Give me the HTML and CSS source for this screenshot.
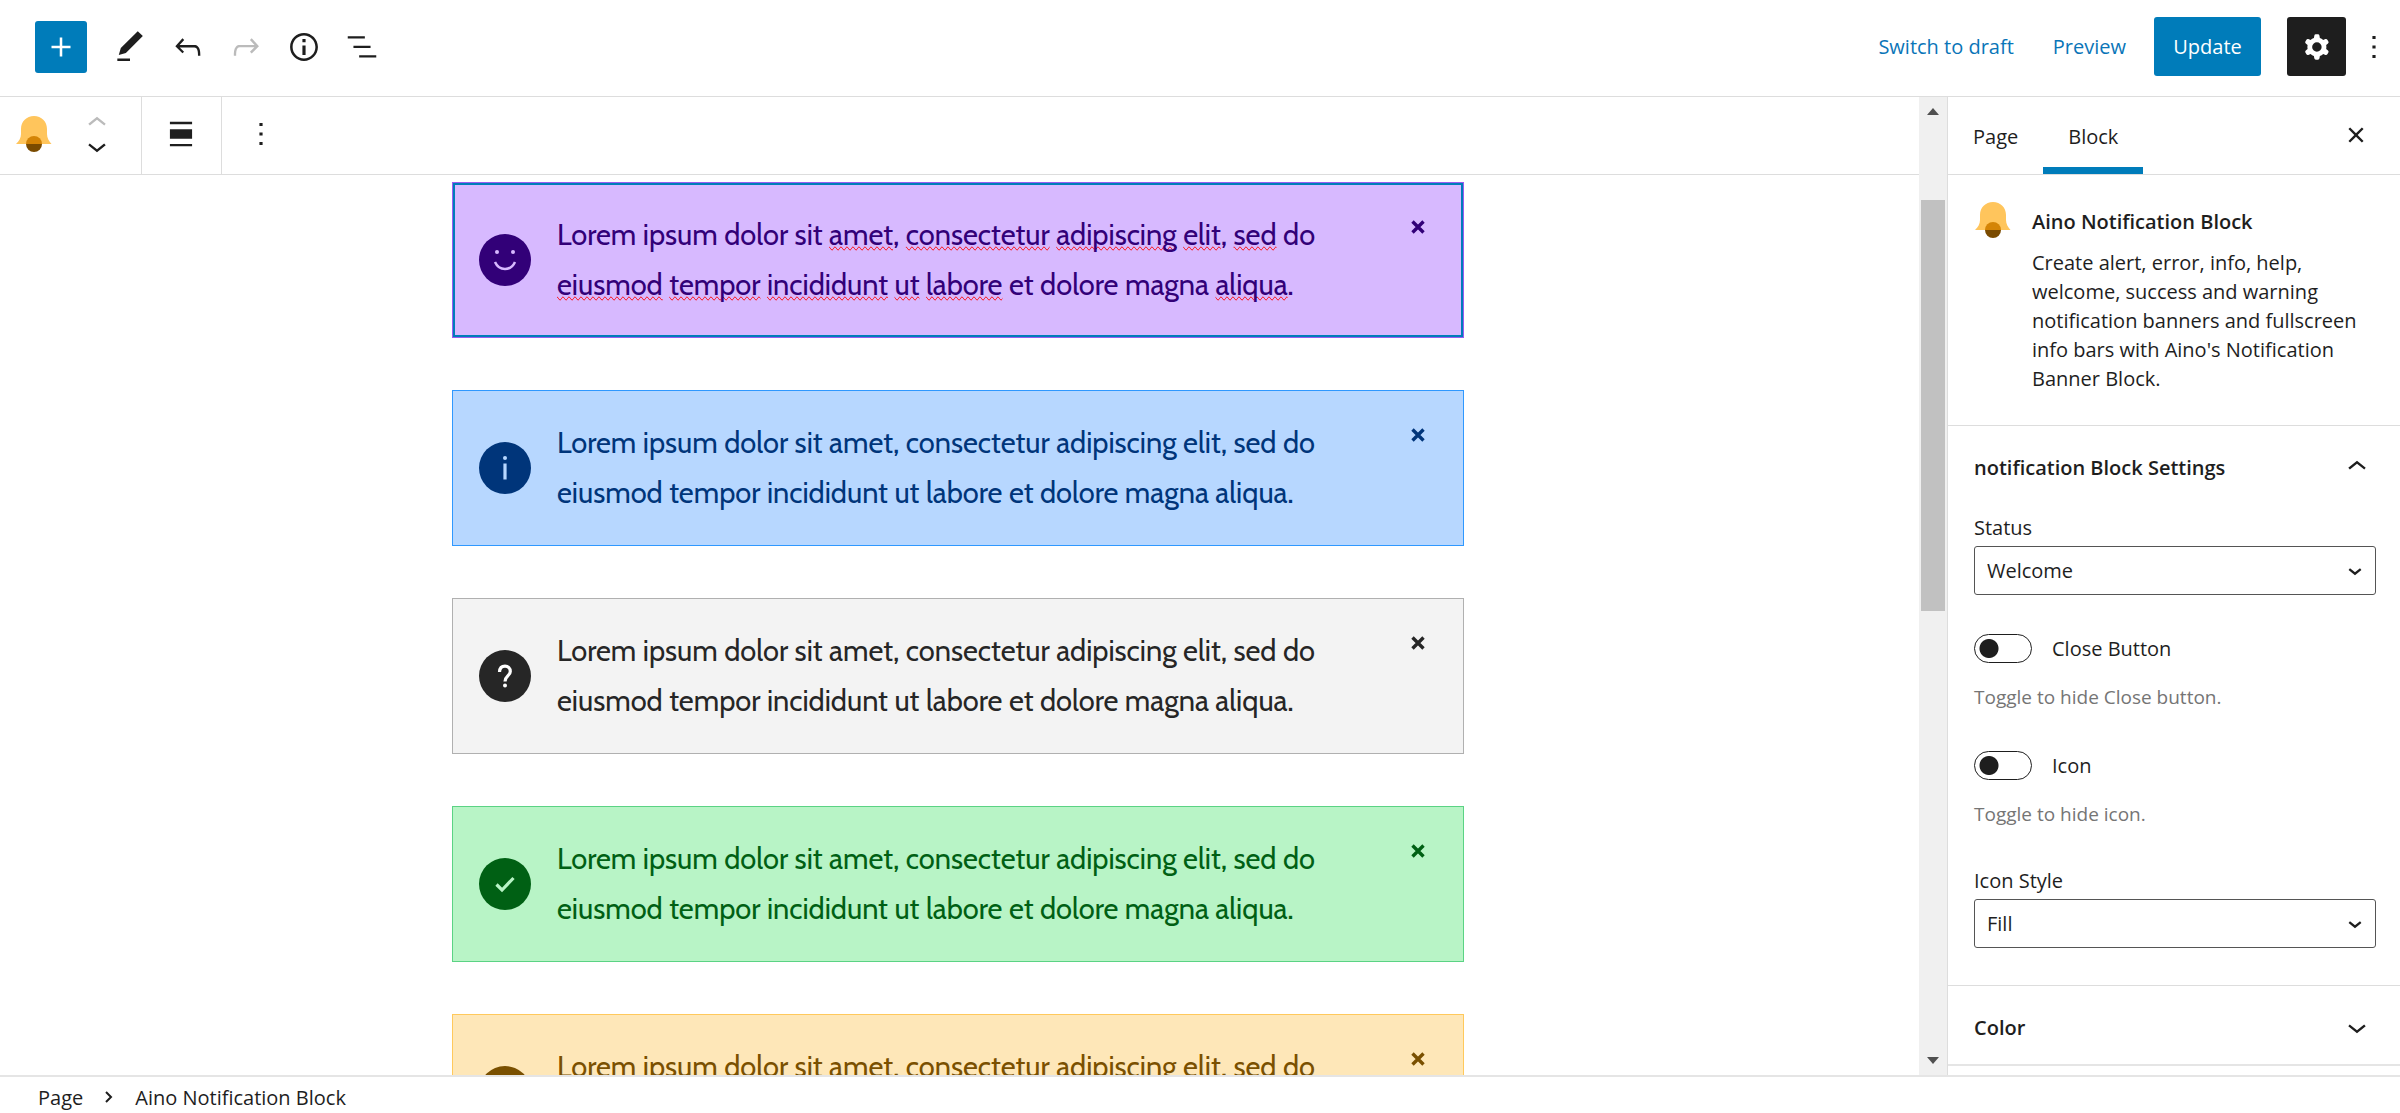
FILE: index.html
```html
<!DOCTYPE html>
<html lang="en">
<head>
  <meta charset="UTF-8">
  <meta name="viewport" content="width=device-width, initial-scale=1.0">
  <title>Edit Page</title>
  <link rel="stylesheet" href="styles.css">
</head>
<body>

  <header class="top-bar">
    <div class="tools">
      <button class="inserter" aria-label="Add block">
        <svg class="icon" viewBox="0 0 24 24"><path d="M18 11.2h-5.2V6h-1.6v5.2H6v1.6h5.2V18h1.6v-5.2H18z"/></svg>
      </button>
      <button class="tool" aria-label="Tools">
        <svg class="icon" viewBox="0 0 24 24"><path d="M20.1 5.1L16.9 2 6.2 12.7l-1.3 4.4 4.5-1.3L20.1 5.1zM4 20.8h8v-1.5H4v1.5z"/></svg>
      </button>
      <button class="tool" aria-label="Undo">
        <svg class="icon" viewBox="0 0 24 24"><path d="M18.3 11.7c-.6-.6-1.4-.9-2.3-.9H6.7l2.9-3.3-1.1-1-4.5 5L8.5 16l1-1-2.7-2.7H16c.5 0 .9.2 1.3.5 1 1 1 3.4 1 4.5v.3h1.5v-.2c0-1.5 0-4.3-1.5-5.7z"/></svg>
      </button>
      <button class="tool" aria-label="Redo" disabled>
        <svg class="icon" viewBox="0 0 24 24"><path d="M15.6 6.5l-1.1 1 2.9 3.3H8c-.9 0-1.7.3-2.3.9-1.4 1.5-1.4 4.2-1.4 5.6v.2h1.5v-.3c0-1.1 0-3.5 1-4.5.3-.3.7-.5 1.3-.5h9.2L14.5 15l1.1 1.1 4.6-4.6-4.6-5z"/></svg>
      </button>
      <button class="tool" aria-label="Details">
        <svg class="icon" viewBox="0 0 24 24"><path d="M12 3.2c-4.8 0-8.8 3.9-8.8 8.8 0 4.8 3.9 8.8 8.8 8.8 4.8 0 8.8-3.9 8.8-8.8 0-4.8-4-8.8-8.8-8.8zm0 16c-4 0-7.2-3.3-7.2-7.2C4.8 8 8 4.8 12 4.8s7.2 3.3 7.2 7.2c0 4-3.2 7.2-7.2 7.2zM11 17h2v-6h-2v6zm0-8h2V7h-2v2z"/></svg>
      </button>
      <button class="tool" aria-label="List view">
        <svg class="icon" viewBox="0 0 24 24"><path d="M13.8 5.2H3v1.5h10.8V5.2zm-3.6 12v1.5H21v-1.5H10.2zm7.2-6H6.6v1.5h10.8v-1.5z"/></svg>
      </button>
    </div>
    <div class="actions">
      <button class="link-button">Switch to draft</button>
      <button class="link-button">Preview</button>
      <button class="update">Update</button>
      <button class="settings" aria-label="Settings">
        <svg class="icon" viewBox="0 0 24 24"><path fill-rule="evenodd" d="M10.289 4.836A1 1 0 0111.275 4h1.306a1 1 0 01.987.836l.244 1.466c.787.26 1.503.679 2.108 1.218l1.393-.522a1 1 0 011.216.437l.653 1.13a1 1 0 01-.23 1.273l-1.148.944a6.025 6.025 0 010 2.435l1.149.946a1 1 0 01.23 1.272l-.653 1.13a1 1 0 01-1.216.437l-1.394-.522c-.605.54-1.32.958-2.108 1.218l-.244 1.466a1 1 0 01-.987.836h-1.306a1 1 0 01-.986-.836l-.244-1.466a5.995 5.995 0 01-2.108-1.218l-1.394.522a1 1 0 01-1.217-.436l-.653-1.131a1 1 0 01.23-1.272l1.149-.946a6.026 6.026 0 010-2.435l-1.148-.944a1 1 0 01-.23-1.272l.653-1.131a1 1 0 011.217-.437l1.393.522a5.994 5.994 0 012.108-1.218l.244-1.466zM14.929 12a3 3 0 11-6 0 3 3 0 016 0z"/></svg>
      </button>
      <button class="more" aria-label="Options">
        <svg class="icon" viewBox="0 0 24 24"><path d="M13 19h-2v-2h2v2zm0-6h-2v-2h2v2zm0-6h-2V5h2v2z"/></svg>
      </button>
    </div>
  </header>

  <div class="workspace">
    <main class="editor">
      <div class="block-toolbar">
        <div class="toolbar-group mover-group">
          <button class="block-type" aria-label="Change block type">
            <svg class="bell" viewBox="0 0 36 36">
              <path fill="#ffc55c" d="M5 13C5 5.500 10.500 0 18 0s13 5.500 13 13v5c0 4 2 7 4.500 10H0c3-3 5-6 5-10z"/>
              <path fill="#7a4b00" d="M10 28h16a8 8 0 0 1-16 0z"/>
              <path fill="#d48406" d="M10 28a8 8 0 0 1 16 0z"/>
            </svg>
          </button>
          <div class="mover">
            <button aria-label="Move up" disabled>
              <svg class="icon" viewBox="0 0 24 24"><path d="M6.500 12.400L12 8l5.500 4.400-.9 1.200L12 10l-4.500 3.600-1-1.200z"/></svg>
            </button>
            <button aria-label="Move down">
              <svg class="icon" viewBox="0 0 24 24"><path d="M17.500 11.600L12 16l-5.500-4.400.9-1.200L12 14l4.500-3.600 1 1.200z"/></svg>
            </button>
          </div>
        </div>
        <button class="toolbar-group" aria-label="Align">
          <svg class="icon" viewBox="0 0 24 24"><path d="M5 9v6h14V9H5zM5 19.800h14v-1.500H5v1.500zM5 4.300v1.500h14V4.300H5z"/></svg>
        </button>
        <button class="toolbar-group" aria-label="More options">
          <svg class="icon" viewBox="0 0 24 24"><path d="M13 19h-2v-2h2v2zm0-6h-2v-2h2v2zm0-6h-2V5h2v2z"/></svg>
        </button>
      </div>

      <div class="canvas">
        <div class="notice welcome selected">
          <svg class="notice-icon" viewBox="0 0 52 52">
            <circle cx="26" cy="26" r="26"/>
            <circle class="mark-fill" cx="18" cy="18" r="2"/>
            <circle class="mark-fill" cx="34" cy="18" r="2"/>
            <path class="mark" d="M16 28c2 4.500 5.500 7 10 7s8-2.500 10-7"/>
          </svg>
          <p>Lorem ipsum dolor sit <u>amet</u>, <u>consectetur</u> <u>adipiscing</u> <u>elit</u>, <u>sed</u> do <u>eiusmod</u> <u>tempor</u> <u>incididunt</u> <u>ut</u> <u>labore</u> et dolore magna <u>aliqua</u>.</p>
          <button class="dismiss" aria-label="Close"><svg viewBox="0 0 14 14"><path d="M1.500 1.500l11 11M12.500 1.500l-11 11"/></svg></button>
        </div>

        <div class="notice info">
          <svg class="notice-icon" viewBox="0 0 52 52">
            <circle cx="26" cy="26" r="26"/>
            <circle class="mark-fill" cx="26" cy="16" r="2"/>
            <path class="mark thick" d="M26 21.500v16"/>
          </svg>
          <p>Lorem ipsum dolor sit amet, consectetur adipiscing elit, sed do eiusmod tempor incididunt ut labore et dolore magna aliqua.</p>
          <button class="dismiss" aria-label="Close"><svg viewBox="0 0 14 14"><path d="M1.500 1.500l11 11M12.500 1.500l-11 11"/></svg></button>
        </div>

        <div class="notice help">
          <svg class="notice-icon" viewBox="0 0 52 52">
            <circle cx="26" cy="26" r="26"/>
            <path class="mark thick" d="M20.500 22c.2-3.600 2.300-5.800 5.500-5.800s5.300 2.200 5.300 5.200c0 4.600-5.300 4.600-5.300 10"/>
            <circle class="mark-fill" cx="26" cy="35.500" r="2"/>
          </svg>
          <p>Lorem ipsum dolor sit amet, consectetur adipiscing elit, sed do eiusmod tempor incididunt ut labore et dolore magna aliqua.</p>
          <button class="dismiss" aria-label="Close"><svg viewBox="0 0 14 14"><path d="M1.500 1.500l11 11M12.500 1.500l-11 11"/></svg></button>
        </div>

        <div class="notice success">
          <svg class="notice-icon" viewBox="0 0 52 52">
            <circle cx="26" cy="26" r="26"/>
            <path class="mark thick" d="M17.500 26.500l5.500 5.500L34.500 20"/>
          </svg>
          <p>Lorem ipsum dolor sit amet, consectetur adipiscing elit, sed do eiusmod tempor incididunt ut labore et dolore magna aliqua.</p>
          <button class="dismiss" aria-label="Close"><svg viewBox="0 0 14 14"><path d="M1.500 1.500l11 11M12.500 1.500l-11 11"/></svg></button>
        </div>

        <div class="notice warning">
          <svg class="notice-icon" viewBox="0 0 52 52">
            <circle cx="26" cy="26" r="26"/>
            <path class="mark thick" d="M26 15v15"/>
            <circle class="mark-fill" cx="26" cy="36" r="2"/>
          </svg>
          <p>Lorem ipsum dolor sit amet, consectetur adipiscing elit, sed do eiusmod tempor incididunt ut labore et dolore magna aliqua.</p>
          <button class="dismiss" aria-label="Close"><svg viewBox="0 0 14 14"><path d="M1.500 1.500l11 11M12.500 1.500l-11 11"/></svg></button>
        </div>
      </div>
    </main>

    <div class="scrollbar">
      <svg class="arrow" viewBox="0 0 12 7"><path d="M0 7L6 0l6 7z"/></svg>
      <div class="track"><div class="thumb"></div></div>
      <svg class="arrow" viewBox="0 0 12 7"><path d="M0 0l6 7 6-7z"/></svg>
    </div>

    <aside class="sidebar">
      <div class="tabs">
        <button class="tab">Page</button>
        <button class="tab active">Block</button>
        <button class="close-sidebar" aria-label="Close settings">
          <svg class="icon" viewBox="0 0 24 24"><path d="M12 13.060l3.712 3.713 1.061-1.060L13.061 12l3.712-3.712-1.060-1.060L12 10.938 8.288 7.227l-1.061 1.060L10.939 12l-3.712 3.712 1.060 1.061L12 13.061z"/></svg>
        </button>
      </div>

      <section class="block-card">
        <svg class="bell" viewBox="0 0 36 36">
          <path fill="#ffc55c" d="M5 13C5 5.500 10.500 0 18 0s13 5.500 13 13v5c0 4 2 7 4.500 10H0c3-3 5-6 5-10z"/>
          <path fill="#7a4b00" d="M10 28h16a8 8 0 0 1-16 0z"/>
          <path fill="#d48406" d="M10 28a8 8 0 0 1 16 0z"/>
        </svg>
        <div class="block-about">
          <h2>Aino Notification Block</h2>
          <p>Create alert, error, info, help, welcome, success and warning notification banners and fullscreen info bars with Aino's Notification Banner Block.</p>
        </div>
      </section>

      <section class="panel">
        <button class="panel-title">
          notification Block Settings
          <svg class="icon" viewBox="0 0 24 24"><path d="M6.500 12.400L12 8l5.500 4.400-.9 1.200L12 10l-4.500 3.600-1-1.200z"/></svg>
        </button>
        <div class="panel-body">
          <div class="field">
            <label for="status">Status</label>
            <div class="select">
              <select id="status">
                <option>Welcome</option>
                <option>Info</option>
                <option>Help</option>
                <option>Success</option>
                <option>Warning</option>
              </select>
              <svg viewBox="0 0 12 7"><path d="M1 1l5 4 5-4"/></svg>
            </div>
          </div>
          <div class="toggle-field">
            <label class="toggle"><input type="checkbox"> Close Button</label>
            <p>Toggle to hide Close button.</p>
          </div>
          <div class="toggle-field">
            <label class="toggle"><input type="checkbox"> Icon</label>
            <p>Toggle to hide icon.</p>
          </div>
          <div class="field">
            <label for="icon-style">Icon Style</label>
            <div class="select">
              <select id="icon-style">
                <option>Fill</option>
                <option>Outline</option>
              </select>
              <svg viewBox="0 0 12 7"><path d="M1 1l5 4 5-4"/></svg>
            </div>
          </div>
        </div>
      </section>

      <section class="panel">
        <button class="panel-title">
          Color
          <svg class="icon" viewBox="0 0 24 24"><path d="M17.500 11.600L12 16l-5.500-4.400.9-1.200L12 14l4.500-3.600 1 1.200z"/></svg>
        </button>
      </section>
    </aside>
  </div>

  <footer class="breadcrumb">
    <button>Page</button>
    <svg viewBox="0 0 8 12"><path d="M1 1l5 5-5 5"/></svg>
    <span>Aino Notification Block</span>
  </footer>

</body>
</html>
```
FILE: styles.css
```css
* {
  box-sizing: border-box;
}

body {
  display: flex;
  flex-direction: column;
  height: 100vh;
  margin: 0;
  overflow: hidden;
  font-family: "Segoe UI", "Open Sans", "Noto Sans", sans-serif;
  font-size: 20px;
  line-height: 29px;
  color: #1e1e1e;
  background-color: #fff;
}

h2, p {
  margin: 0;
}

button {
  display: flex;
  align-items: center;
  justify-content: center;
  padding: 0;
  border: 0;
  background: none;
  color: inherit;
  font: inherit;
  cursor: pointer;
}

button:disabled {
  color: #bbb;
}

.icon {
  flex: none;
  width: 38px;
  height: 38px;
  fill: currentColor;
}

.bell {
  flex: none;
  width: 36px;
  height: 36px;
}

/* top bar */
.top-bar {
  display: flex;
  flex: none;
  align-items: center;
  justify-content: space-between;
  height: 97px;
  padding: 0 7px 3px 35px;
  border-bottom: 1px solid #ddd;
}

.tools, .actions {
  display: flex;
  align-items: center;
}

.inserter {
  width: 52px;
  height: 52px;
  margin-right: 14px;
  border-radius: 3px;
  background-color: #007cba;
  color: #fff;
}

.tool {
  width: 58px;
  height: 58px;
}

.link-button {
  margin-right: 39px;
  color: #0a75b8;
}

.link-button:nth-child(2) {
  margin-right: 28px;
}

.update {
  width: 107px;
  height: 59px;
  margin-right: 26px;
  border-radius: 3px;
  background-color: #007cba;
  color: #fff;
}

.settings {
  width: 59px;
  height: 59px;
  margin-right: 9px;
  border-radius: 3px;
  background-color: #1e1e1e;
  color: #fff;
}

/* workspace */
.workspace {
  display: flex;
  flex: 1;
  min-height: 0;
}

.editor {
  display: flex;
  flex: 1;
  flex-direction: column;
  min-width: 0;
}

.block-toolbar {
  display: flex;
  flex: none;
  height: 78px;
  border-bottom: 1px solid #ddd;
}

.toolbar-group {
  width: 80px;
  padding: 0 2px 3px 0;
  border-right: 1px solid #ddd;
}

.toolbar-group:last-child {
  border-right: 0;
}

.mover-group {
  display: flex;
  align-items: center;
  gap: 26px;
  width: 142px;
  padding-left: 16px;
}

.mover button {
  height: 23px;
}

.canvas {
  display: flex;
  flex: 1;
  flex-direction: column;
  align-items: center;
  gap: 52px;
  min-height: 0;
  padding: 7px 20px 0 17px;
  overflow: hidden;
}

/* notices */
.notice {
  display: flex;
  flex: none;
  align-items: center;
  gap: 26px;
  width: 100%;
  max-width: 1012px;
  min-height: 156px;
  padding: 27px 38px 27px 26px;
  border: 1px solid;
  font-family: Cabin, Lato, sans-serif;
  font-size: 29px;
  line-height: 50px;
}

.notice p {
  flex: 1;
}

/* misspelled words, wavy underline where spelling-error is missing */
.notice u {
  text-decoration: underline wavy #f00 1px;
  text-decoration: spelling-error;
  text-decoration-skip-ink: none;
}

.notice-icon {
  flex: none;
  width: 52px;
  height: 52px;
  fill: currentColor;
}

.notice-icon .mark {
  fill: none;
  stroke: var(--tint);
  stroke-width: 2.5;
}

.notice-icon .thick {
  stroke-width: 3.2;
}

.notice-icon .mark-fill {
  fill: var(--tint);
}

.dismiss {
  align-self: flex-start;
  margin-top: 10px;
}

.dismiss svg {
  width: 14px;
  height: 14px;
  fill: none;
  stroke: currentColor;
  stroke-width: 3.4;
}

.welcome {
  --tint: #d7b9ff;
  background-color: #d7b9ff;
  border-color: #9a5cf0;
  color: #320078;
}

.selected {
  outline: 2px solid #007cba;
  outline-offset: -3px;
}

.info {
  --tint: #b7d7ff;
  background-color: #b7d7ff;
  border-color: #2f98ff;
  color: #00357a;
}

.help {
  --tint: #fff;
  background-color: #f3f3f3;
  border-color: #b0b0b0;
  color: #262626;
}

.success {
  --tint: #b8f4c6;
  background-color: #b8f4c6;
  border-color: #5bd384;
  color: #006014;
}

.warning {
  --tint: #fee7b8;
  background-color: #fee7b8;
  border-color: #ffc95c;
  color: #7a5000;
}

/* scrollbar */
.scrollbar {
  display: flex;
  flex: none;
  flex-direction: column;
  align-items: center;
  width: 28px;
  padding: 11px 0;
  background-color: #f0f0f0;
}

.arrow {
  width: 12px;
  height: 7px;
  fill: #505050;
}

.track {
  flex: 1;
  width: 24px;
  padding-top: 85px;
}

.thumb {
  height: 48%;
  background-color: #c1c1c1;
}

/* sidebar */
.sidebar {
  flex: none;
  width: 453px;
  border-left: 1px solid #ddd;
  overflow: hidden;
}

.tabs {
  display: flex;
  height: 78px;
  border-bottom: 1px solid #ddd;
}

.tab {
  padding: 1px 25px 0;
  font-weight: 500;
}

.tab.active {
  box-shadow: inset 0 -7px #007cba;
}

.close-sidebar {
  margin-left: auto;
  padding: 0 25px 2px 0;
}

.block-card {
  display: flex;
  gap: 21px;
  padding: 27px 40px 32px 27px;
}

.block-about {
  padding-top: 5px;
}

.block-card h2 {
  margin-bottom: 12px;
  font-size: 20px;
  line-height: 29px;
  font-weight: 600;
}

.panel {
  border-top: 1px solid #ddd;
}

.panel:last-child {
  border-bottom: 2px solid #e5e5e5;
}

.panel-title {
  justify-content: space-between;
  width: 100%;
  height: 78px;
  padding: 4px 24px 0 26px;
  font-weight: 600;
}

.panel-body {
  padding: 9px 24px 37px 26px;
}

.field label {
  display: block;
  margin-bottom: 4px;
}

.select {
  position: relative;
}

.select select {
  width: 100%;
  height: 49px;
  padding: 0 40px 0 12px;
  border: 1px solid #555;
  border-radius: 3px;
  appearance: none;
  background-color: #fff;
  color: #1e1e1e;
  font: inherit;
}

.select svg {
  position: absolute;
  top: 22px;
  right: 14px;
  width: 14px;
  height: 8px;
  fill: none;
  stroke: #1e1e1e;
  stroke-width: 2;
  pointer-events: none;
}

.toggle-field {
  height: 78px;
  margin: 39px 0 37px;
}

.toggle {
  display: flex;
  align-items: center;
  gap: 20px;
}

.toggle input {
  width: 58px;
  height: 29px;
  margin: 0;
  border: 1px solid #1e1e1e;
  border-radius: 15px;
  appearance: none;
  background: radial-gradient(circle at 14px 50%, #1e1e1e 9px, #fff 10px);
}

.toggle input:checked {
  background: radial-gradient(circle at 42px 50%, #fff 9px, #007cba 10px);
}

.toggle-field p {
  margin-top: 20px;
  font-size: 19px;
  color: #757575;
}

/* footer */
.breadcrumb {
  display: flex;
  flex: none;
  align-items: center;
  gap: 22px;
  height: 38px;
  padding: 4px 38px 0;
  border-top: 2px solid #e5e5e5;
}

.breadcrumb svg {
  width: 8px;
  height: 12px;
  fill: none;
  stroke: #1e1e1e;
  stroke-width: 2;
}
```
